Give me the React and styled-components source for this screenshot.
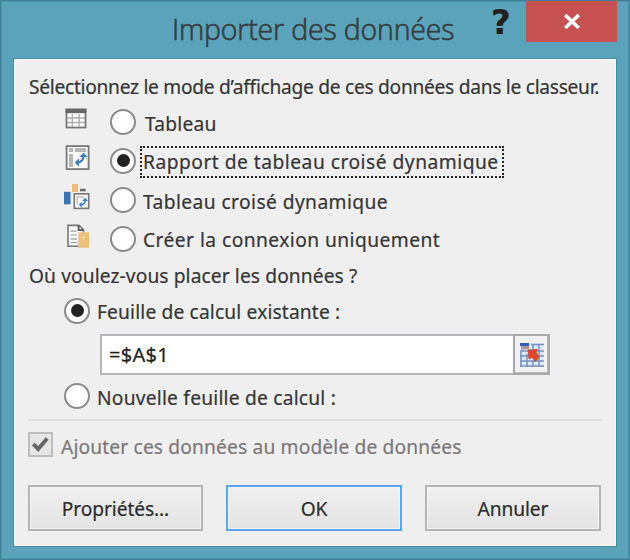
import React from "react";
import styled, { createGlobalStyle } from "styled-components";

const GlobalStyle = createGlobalStyle`
  *, *::before, *::after { box-sizing: border-box; }
  html, body { margin: 0; padding: 0; }
  body { font-family: "Noto Sans", "Open Sans", sans-serif; font-size: 19.2px; color: #353535; -webkit-text-stroke: 0.2px; }
  svg { display: block; flex: none; }
`;

const Window = styled.div`
  width: 630px;
  height: 560px;
  padding: 0 12px;
  background: #5ba2bb;
  border: 1px solid #417f94;
  box-shadow: inset 0 0 0 1px #4f93ab;
  overflow: hidden;
`;

const TitleBar = styled.header`
  display: grid;
  grid-template-columns: 1fr 35px 91px;
  height: 57px;
`;

const Title = styled.h1`
  margin: 0;
  padding: 0 0 0 159px;
  font-family: "Open Sans", "Noto Sans", sans-serif;
  font-size: 28.5px;
  font-weight: 300;
  line-height: 56px;
  letter-spacing: -0.18px;
  white-space: nowrap;
  color: #353d40;
  -webkit-text-stroke: 0.6px #353d40;
`;

const HelpButton = styled.button`
  height: 41px;
  padding: 0;
  border: 0;
  background: none;
  font: bold 34px/43px "DejaVu Sans", sans-serif;
  color: #231f20;
  text-align: left;
`;

const CloseButton = styled.button`
  display: flex;
  align-items: center;
  justify-content: center;
  height: 41px;
  padding: 0;
  border: 0;
  background: #c75050;
`;

const Client = styled.main`
  display: flex;
  flex-direction: column;
  width: 604px;
  height: 489px;
  padding: 0 14px;
  background: #efefef;
  border: 1px solid #4b8ba0;
  box-shadow: inset 0 0 0 1px #fbfbfb;
`;

const Text = styled.span`
  letter-spacing: ${(p) => p.$spacing || 0}px;
  white-space: nowrap;
`;

const Prompt = styled.p`
  margin: 0;
  padding: ${(p) => p.$top || 0}px 0 0 1px;
  height: ${(p) => p.$height}px;
  line-height: ${(p) => p.$line}px;
`;

const ChoiceRow = styled.label`
  display: grid;
  grid-template-columns: 48px 33px auto;
  align-items: center;
  justify-content: start;
  height: 39px;
  padding-left: 34px;
`;

const PlaceRow = styled.label`
  display: grid;
  grid-template-columns: 33px auto;
  align-items: center;
  justify-content: start;
  height: ${(p) => p.$height}px;
  margin-top: ${(p) => p.$gap || 0}px;
  padding-left: 36px;
`;

const RadioRing = styled.span`
  display: flex;
  align-items: center;
  justify-content: center;
  width: 26px;
  height: 26px;
  border: 2px solid #8b8b8b;
  border-radius: 50%;
  background: #fff;
`;

const RadioDot = styled.span`
  width: 13px;
  height: 13px;
  border-radius: 50%;
  background: #222;
`;

const ChoiceLabel = styled.span`
  padding-top: ${(p) => p.$drop || 0}px;
  padding-left: ${(p) => p.$indent || 0}px;
`;

const FocusedLabel = styled.span`
  display: flex;
  align-items: center;
  width: 364px;
  height: 32px;
  margin: 3px 0 0 -3px;
  padding: 0 0 2px 1px;
  border: 2px dotted #222;
`;

const RangeField = styled.div`
  display: grid;
  grid-template-columns: 1fr 37px;
  width: 450px;
  height: 40px;
  margin: 8px 0 0 72px;
  background: #fff;
`;

const RangeInput = styled.div`
  padding: 1px 0 0 7px;
  border: 2px solid #b5b5ba;
  border-right: 0;
  font-size: 20px;
  line-height: 36px;
  color: #222;
`;

const RangeButton = styled.button`
  display: flex;
  align-items: center;
  justify-content: center;
  padding: 0;
  background: #f1f1f1;
  border: 2px solid #a9a9ab;
  box-shadow: inset -1px -1px 0 #b9b9bb;
`;

const Separator = styled.hr`
  width: 574px;
  height: 2px;
  margin: 7px 0 0;
  border: 0;
  background: #dfdfdf;
`;

const CheckRow = styled.label`
  display: flex;
  gap: 8px;
  height: 25px;
  margin-top: 11px;
  color: #7c7878;
  line-height: 29px;
`;

const CheckBox = styled.span`
  display: flex;
  align-items: center;
  justify-content: center;
  width: 25px;
  height: 25px;
  border: 2px solid #bdbdbd;
  background: #e6e6e6;
`;

const Actions = styled.footer`
  display: grid;
  grid-template-columns: 175px 176px 176px;
  column-gap: 23px;
  margin-top: 28px;
`;

const ActionButton = styled.button`
  height: 46px;
  padding: 1px 0 0;
  border: 2px solid ${(p) => (p.$primary ? "#57a5f7" : "#b4b4b4")};
  background: linear-gradient(#f0f0f0, #e3e3e3);
  box-shadow: inset 0 0 0 1px #f4f4f4;
  font: inherit;
  color: #2c2c2c;
  line-height: 41px;
  letter-spacing: -0.1px;
`;

const TableIcon = () => (
  <svg width="30" height="39" viewBox="0 0 30 39">
    <rect x="4.5" y="7.5" width="19" height="18" fill="#fff" stroke="#777" strokeWidth="1.8" />
    <path d="M3.6 9H24.4" stroke="#666" strokeWidth="4.4" />
    <path d="M10.3 12V25M17.2 12V25M5 16H23M5 20.5H23" stroke="#aaa" strokeWidth="1.3" />
  </svg>
);

const PivotReportIcon = () => (
  <svg width="30" height="39" viewBox="0 0 30 39">
    <rect x="4.6" y="5.1" width="22" height="23" fill="#fafafa" stroke="#777" strokeWidth="1.8" />
    <path d="M7 7H11V11H7ZM13 7H24V11H13ZM7 13H11V26H7Z" fill="#b5b5b5" />
    <path d="M15 21.5Q21.5 21.5 21.5 14" fill="none" stroke="#3b7fbd" strokeWidth="2.2" />
    <path d="M17.3 16L21.5 11.7L25.7 16ZM17 17.2L12.7 21.5L17 25.8Z" fill="#3b7fbd" />
  </svg>
);

const PivotTableIcon = () => (
  <svg width="30" height="39" viewBox="0 0 30 39">
    <path d="M10 4H16V12H10Z" fill="#e9bd75" />
    <path d="M18 8.8H23.7V11.3H18Z" fill="#666" />
    <path d="M2 11.8H8.5V24.3H2Z" fill="#3975b1" />
    <rect x="12.3" y="13.8" width="14.4" height="14.6" fill="#f7f7f7" stroke="#777" strokeWidth="1.6" />
    <path d="M15.2 24V17H22" fill="none" stroke="#c4c4c4" strokeWidth="1.5" />
    <path d="M18.5 24.8Q23.2 24.8 23.2 20" fill="none" stroke="#3b7fbd" strokeWidth="1.6" />
    <path d="M20.2 21L23.2 17.8L26 21ZM19.8 22L16.8 24.8L19.8 27.6Z" fill="#3b7fbd" />
  </svg>
);

const ConnectionIcon = () => (
  <svg width="30" height="39" viewBox="0 0 30 39">
    <path d="M6 6.4H17L21.5 10.8V27.3H6Z" fill="#fafafa" stroke="#777" strokeWidth="1.6" />
    <path d="M16.6 6.5V11.2H21.5" fill="none" stroke="#555" strokeWidth="1.8" />
    <path d="M8.5 12.2H14.5M8.5 16H15M8.5 19.8H15M8.5 23.5H15" stroke="#999" strokeWidth="1.2" />
    <path d="M16.3 13.3H27.3V28.7H16.3Z" fill="#ebc27c" />
    <circle cx="21.6" cy="18.6" r="1" fill="#fff2d5" />
  </svg>
);

const RangeIcon = () => (
  <svg width="24" height="25" viewBox="0 0 24 25">
    <path d="M0 1H24V25H0Z" fill="#dce8fb" />
    <path d="M1 4.5H9M11 2.5H24M1 9H24M0 14H24M0 19H24M0 24H24M1 8V25M7 12V25M13 18V25M19 3V25M13 2V8" stroke="#7791bd" strokeWidth="1.5" fill="none" />
    <path d="M0 1H9V4H0Z" fill="#315bbd" />
    <path d="M1 4H9V7.5H1Z" fill="#a59b91" />
    <path d="M8 8L17.5 7.5L16 10L19 15L15.5 19.5L12 15.5L9 17Z" fill="#e64529" stroke="#b93b2b" strokeWidth=".7" />
  </svg>
);

const CloseIcon = () => (
  <svg width="18" height="15" viewBox="0 0 18 15">
    <path d="M2.2 1L15.8 14M15.8 1L2.2 14" stroke="#fff" strokeWidth="3.6" />
  </svg>
);

const CheckIcon = () => (
  <svg width="19" height="17" viewBox="0 0 19 17">
    <path d="M2.3 8L7.2 13L16.2 2.5" fill="none" stroke="#656565" strokeWidth="3.9" />
  </svg>
);

function Radio({ checked }) {
  return <RadioRing>{checked && <RadioDot />}</RadioRing>;
}

export default function App() {
  return (
    <>
      <GlobalStyle />
      <Window>
        <TitleBar>
          <Title>Importer des données</Title>
          <HelpButton>?</HelpButton>
          <CloseButton aria-label="Fermer"><CloseIcon /></CloseButton>
        </TitleBar>
        <Client>
          <Prompt $height={43} $line={31} $top={12}>
            <Text $spacing={-0.29}>Sélectionnez le mode d’affichage de ces données dans le classeur.</Text>
          </Prompt>

          <ChoiceRow>
            <TableIcon />
            <Radio />
            <ChoiceLabel $drop={4} $indent={2}><Text $spacing={0.2}>Tableau</Text></ChoiceLabel>
          </ChoiceRow>
          <ChoiceRow>
            <PivotReportIcon />
            <Radio checked />
            <FocusedLabel><Text $spacing={0.5}>Rapport de tableau croisé dynamique</Text></FocusedLabel>
          </ChoiceRow>
          <ChoiceRow>
            <PivotTableIcon />
            <Radio />
            <ChoiceLabel $drop={4}><Text $spacing={0.42}>Tableau croisé dynamique</Text></ChoiceLabel>
          </ChoiceRow>
          <ChoiceRow>
            <ConnectionIcon />
            <Radio />
            <ChoiceLabel $drop={2}><Text $spacing={0.45}>Créer la connexion uniquement</Text></ChoiceLabel>
          </ChoiceRow>

          <Prompt $height={37} $line={35}>
            <Text $spacing={0.1}>Où voulez-vous placer les données ?</Text>
          </Prompt>

          <PlaceRow $height={31}>
            <Radio checked />
            <ChoiceLabel $drop={2}><Text $spacing={0.15}>Feuille de calcul existante :</Text></ChoiceLabel>
          </PlaceRow>
          <RangeField>
            <RangeInput><Text $spacing={0.3}>=$A$1</Text></RangeInput>
            <RangeButton aria-label="Réduire"><RangeIcon /></RangeButton>
          </RangeField>
          <PlaceRow $height={32} $gap={6}>
            <Radio />
            <ChoiceLabel $drop={3}><Text $spacing={0.22}>Nouvelle feuille de calcul :</Text></ChoiceLabel>
          </PlaceRow>

          <Separator />
          <CheckRow>
            <CheckBox><CheckIcon /></CheckBox>
            <Text $spacing={0.15}>Ajouter ces données au modèle de données</Text>
          </CheckRow>
          <Actions>
            <ActionButton>Propriétés...</ActionButton>
            <ActionButton $primary>OK</ActionButton>
            <ActionButton>Annuler</ActionButton>
          </Actions>
        </Client>
      </Window>
    </>
  );
}
